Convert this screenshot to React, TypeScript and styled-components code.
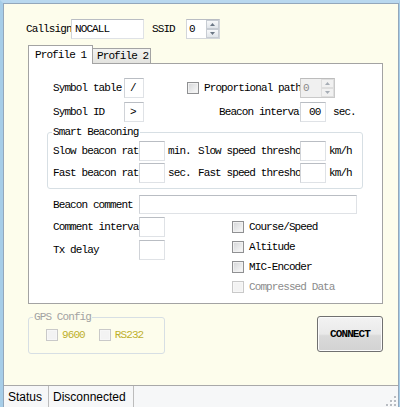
import React from 'react';
import styled, { createGlobalStyle } from 'styled-components';

const GlobalStyle = createGlobalStyle`
  html, body {
    margin: 0;
    padding: 0;
  }
  body {
    font-family: "Liberation Mono", "DejaVu Sans Mono", monospace;
    font-size: 11px;
    letter-spacing: -0.9px;
    line-height: 12px;
    color: #000;
  }
`;

function Arrow({ up }: { up?: boolean }) {
    return (
        <svg width="5" height="3" viewBox="0 0 5 3">
            <path d={up ? 'M0 3 L2.5 0 L5 3 Z' : 'M0 0 L2.5 3 L5 0 Z'} fill="#6b7785" />
        </svg>
    );
}

function Spinner({ value, width, disabled }: { value: string; width: number; disabled?: boolean }) {
    return (
        <Spin $w={width} $disabled={disabled}>
            <SpinValue $disabled={disabled}>{value}</SpinValue>
            <SpinButtons>
                <SpinBtn $disabled={disabled}><Arrow up /></SpinBtn>
                <SpinBtn $disabled={disabled}><Arrow /></SpinBtn>
            </SpinButtons>
        </Spin>
    );
}

function Check({ label, disabled, tone }: { label: string; disabled?: boolean; tone?: string }) {
    return (
        <CheckItem $disabled={disabled} $tone={tone}>
            <Box $disabled={disabled} />
            <span>{label}</span>
        </CheckItem>
    );
}

function App() {
    return (
        <Frame>
            <GlobalStyle />
            <Client>
                <Main>
                    <TopRow>
                        <Label $w={45}>Callsign</Label>
                        <TextBox $w={73}>NOCALL</TextBox>
                        <Label $w={34} style={{ marginLeft: 8 }}>SSID</Label>
                        <Spinner value="0" width={34} />
                    </TopRow>

                    <TabStrip>
                        <Tab $active>Profile 1</Tab>
                        <Tab>Profile 2</Tab>
                    </TabStrip>

                    <Panel>
                        <Row>
                            <Label $w={71}>Symbol table</Label>
                            <TextBox $w={20} $pad={5}>/</TextBox>
                            <CheckSlot $left={43} $w={113}>
                                <Check label="Proportional path" />
                            </CheckSlot>
                            <Spinner value="0" width={35} disabled />
                        </Row>
                        <Row $top={4}>
                            <Label $w={71}>Symbol ID</Label>
                            <TextBox $w={20} $pad={5}>&gt;</TextBox>
                            <Label $w={81} style={{ marginLeft: 75 }}>Beacon interval</Label>
                            <TextBox $w={26} $pad={8}>00</TextBox>
                            <Unit $left={7}>sec.</Unit>
                        </Row>

                        <Group $w={316} $left={-6} $top={4}>
                            <Legend>Smart Beaconing</Legend>
                            <Row>
                                <Label $w={86}>Slow beacon rate</Label>
                                <TextBox $w={26} />
                                <Unit $left={3} $w={30}>min.</Unit>
                                <Label $w={102}>Slow speed threshold</Label>
                                <TextBox $w={26} />
                                <Unit $left={3}>km/h</Unit>
                            </Row>
                            <Row $top={2}>
                                <Label $w={86}>Fast beacon rate</Label>
                                <TextBox $w={26} />
                                <Unit $left={3} $w={30}>sec.</Unit>
                                <Label $w={102}>Fast speed threshold</Label>
                                <TextBox $w={26} />
                                <Unit $left={3}>km/h</Unit>
                            </Row>
                        </Group>

                        <Row $top={6} $h={19}>
                            <Label $w={86}>Beacon comment</Label>
                            <TextBox $w={218} $h={19} />
                        </Row>

                        <Columns>
                            <div>
                                <Row>
                                    <Label $w={86}>Comment interval</Label>
                                    <TextBox $w={26} />
                                </Row>
                                <Row $top={3}>
                                    <Label $w={86}>Tx delay</Label>
                                    <TextBox $w={26} />
                                </Row>
                            </div>
                            <CheckList>
                                <Check label="Course/Speed" />
                                <Check label="Altitude" />
                                <Check label="MIC-Encoder" />
                                <Check label="Compressed Data" disabled />
                            </CheckList>
                        </Columns>
                    </Panel>

                    <BottomRow>
                        <Group $w={137} $top={7} $disabled>
                            <Legend $disabled>GPS Config</Legend>
                            <GpsRow>
                                <Check label="9600" disabled tone="#bdb02c" />
                                <Check label="RS232" disabled tone="#bdb02c" />
                            </GpsRow>
                        </Group>
                        <ConnectButton>CONNECT</ConnectButton>
                    </BottomRow>
                </Main>

                <StatusBar>
                    <StatusCell $w={45}>Status</StatusCell>
                    <StatusCell $w={85}>Disconnected</StatusCell>
                    <Grip width="10" height="10" viewBox="0 0 10 10">
                        {[[8, 0], [8, 4], [4, 4], [8, 8], [4, 8], [0, 8]].map(([x, y]) => (
                            <g key={`${x}-${y}`}>
                                <rect x={x + 1} y={y + 1} width="2" height="2" fill="#ffffff" />
                                <rect x={x} y={y} width="2" height="2" fill="#b8bcc2" />
                            </g>
                        ))}
                    </Grip>
                </StatusBar>
            </Client>
        </Frame>
    );
}

export default App;

const Frame = styled.div`
  width: 400px;
  height: 407px;
  box-sizing: border-box;
  display: flex;
  border-top: 3px solid #b9d8ef;
  border-left: 3px solid #a6cde8;
  border-right: 1px solid #a6cde8;
`

const Client = styled.div`
  flex: 1;
  display: flex;
  flex-direction: column;
  background: #fdfdec;
  border-top: 1px solid #93a7bb;
  border-left: 1px solid #93a7bb;
  border-right: 1px solid #93a7bb;
`

const Main = styled.div`
  flex: 1;
  display: flex;
  flex-direction: column;
  align-items: flex-start;
  padding: 15px 0 0 24px;
`

const TopRow = styled.div`
  display: flex;
  align-items: center;
  height: 20px;
  margin-left: -2px;
`

const Label = styled.span<{ $w: number }>`
  flex: none;
  width: ${p => p.$w}px;
  white-space: nowrap;
  overflow: hidden;
`

const Unit = styled.span<{ $left?: number; $w?: number }>`
  flex: none;
  margin-left: ${p => p.$left ?? 0}px;
  ${p => (p.$w ? `width: ${p.$w}px;` : '')}
  white-space: nowrap;
`

const TextBox = styled.div<{ $w: number; $h?: number; $pad?: number }>`
  flex: none;
  box-sizing: border-box;
  width: ${p => p.$w}px;
  height: ${p => p.$h ?? 20}px;
  display: flex;
  align-items: center;
  padding: 0 0 0 ${p => p.$pad ?? 3}px;
  background: #fff;
  border: 1px solid #dfe2e6;
  border-top-color: #b9bdc3;
  border-left-color: #d0d3d8;
  overflow: hidden;
  white-space: nowrap;
`

const Spin = styled.div<{ $w: number; $disabled?: boolean }>`
  flex: none;
  box-sizing: border-box;
  width: ${p => p.$w}px;
  height: 20px;
  display: flex;
  background: ${p => (p.$disabled ? '#f0f0f0' : '#fff')};
  border: 1px solid ${p => (p.$disabled ? '#c9c9c9' : '#d3d6da')};
  border-top-color: ${p => (p.$disabled ? '#bcbcbc' : '#b9bdc3')};
`

const SpinValue = styled.span<{ $disabled?: boolean }>`
  flex: 1;
  padding-left: 2px;
  display: flex;
  align-items: center;
  color: ${p => (p.$disabled ? '#8a8a8a' : '#000')};
`

const SpinButtons = styled.div`
  width: 13px;
  display: flex;
  flex-direction: column;
`

const SpinBtn = styled.div<{ $disabled?: boolean }>`
  flex: 1;
  display: flex;
  align-items: center;
  justify-content: center;
  border: 1px solid ${p => (p.$disabled ? '#d0d0d0' : '#c7ccd3')};
  background: ${p => (p.$disabled ? '#f2f2f2' : 'linear-gradient(#f7f8fa, #e1e5ea)')};
  opacity: ${p => (p.$disabled ? 0.55 : 1)};
`

const TabStrip = styled.div`
  display: flex;
  align-items: flex-end;
  height: 18px;
  margin-top: 6px;
`

const Tab = styled.div<{ $active?: boolean }>`
  position: relative;
  z-index: 1;
  box-sizing: border-box;
  display: flex;
  align-items: center;
  border: 1px solid #a3a3a3;
  border-bottom: none;
  ${p =>
    p.$active
      ? `width: 65px; height: 19px; margin-bottom: -1px; padding-left: 6px; background: #fff;`
      : `width: 58px; height: 15px; padding-left: 4px; border-left: none;
         background: linear-gradient(#f3f3f1, #e3e3df);`}
`

const Panel = styled.div`
  box-sizing: border-box;
  width: 355px;
  height: 241px;
  padding: 14px 0 0 24px;
  background: #fff;
  border: 1px solid #a3a3a3;
`

const Row = styled.div<{ $top?: number; $h?: number }>`
  display: flex;
  align-items: center;
  height: ${p => p.$h ?? 20}px;
  margin-top: ${p => p.$top ?? 0}px;
`

const CheckSlot = styled.div<{ $left: number; $w: number }>`
  flex: none;
  width: ${p => p.$w}px;
  margin-left: ${p => p.$left}px;
  display: flex;
`

const Group = styled.fieldset<{ $w: number; $left?: number; $top?: number; $disabled?: boolean }>`
  box-sizing: border-box;
  width: ${p => p.$w}px;
  margin: ${p => p.$top ?? 0}px 0 0 ${p => p.$left ?? 0}px;
  padding: 3px 0 5px 5px;
  border: 1px solid #d7dfe4;
  border-radius: 3px;
  min-width: 0;
`

const Legend = styled.legend<{ $disabled?: boolean }>`
  padding: 0 1px;
  margin-left: -1px;
  line-height: 12px;
  color: ${p => (p.$disabled ? '#a2a2a2' : '#000')};
`

const Columns = styled.div`
  display: flex;
  margin-top: 3px;
`

const CheckList = styled.div`
  display: flex;
  flex-direction: column;
  margin-left: 67px;
`

const CheckItem = styled.label<{ $disabled?: boolean; $tone?: string }>`
  display: flex;
  align-items: center;
  gap: 5px;
  height: 20px;
  white-space: nowrap;
  color: ${p => p.$tone ?? (p.$disabled ? '#8c8c8c' : '#000')};
`

const Box = styled.span<{ $disabled?: boolean }>`
  flex: none;
  box-sizing: border-box;
  width: 12px;
  height: 12px;
  border: 1px solid ${p => (p.$disabled ? '#c9c9c9' : '#8f9092')};
  background: ${p =>
    p.$disabled ? '#f3f3f3' : 'linear-gradient(135deg, #d4d5d7 0%, #e9eaeb 55%, #fafafa 100%)'};
  box-shadow: inset 0 0 0 1px ${p => (p.$disabled ? '#f7f7f7' : '#f1f1f1')};
`

const BottomRow = styled.div`
  display: flex;
  align-items: flex-start;
  justify-content: space-between;
  width: 355px;
`

const GpsRow = styled.div`
  display: flex;
  gap: 14px;
  height: 18px;
  align-items: center;
  padding-left: 12px;
  padding-bottom: 4px;
  label {
    gap: 4px;
  }
`

const ConnectButton = styled.button`
  width: 66px;
  height: 36px;
  margin-top: 12px;
  padding: 0;
  border: 1px solid #707070;
  border-radius: 3px;
  background: linear-gradient(#f3f3f3 0%, #e9e9e9 50%, #dadada 55%, #d2d2d2 100%);
  box-shadow: inset 0 0 0 1px #fbfbfb;
  font-family: "Liberation Mono", monospace;
  font-size: 11px;
  font-weight: bold;
  letter-spacing: -0.9px;
  color: #000;
`

const StatusBar = styled.div`
  flex: none;
  box-sizing: border-box;
  height: 22px;
  display: flex;
  align-items: stretch;
  background: #f6f7f8;
  border-top: 1px solid #a9a9a9;
  font-family: "Liberation Sans", Arial, sans-serif;
  font-size: 12px;
  letter-spacing: 0;
`

const StatusCell = styled.div<{ $w: number }>`
  box-sizing: border-box;
  width: ${p => p.$w}px;
  padding-left: 4px;
  display: flex;
  align-items: center;
  border-right: 1px solid #bcbcbc;
  white-space: nowrap;
`

const Grip = styled.svg`
  margin: auto 2px 1px auto;
`
